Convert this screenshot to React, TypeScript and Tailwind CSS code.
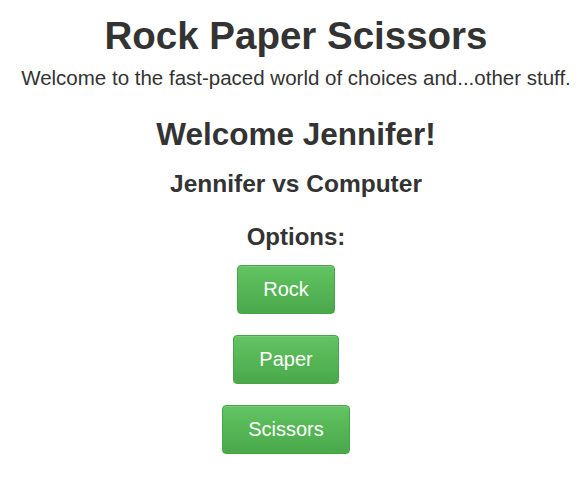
import React from 'react';

const options = ['Rock', 'Paper', 'Scissors'];

const App: React.FC = () => {
  return (
    <div className="min-h-screen bg-white text-[#333333] font-['Liberation_Sans',Arial,sans-serif] text-center pt-[15px] pl-[9px]">
      {/* Header */}
      <h1 className="text-[38.5px] leading-[42px] font-bold">Rock Paper Scissors</h1>
      <p className="mt-[8px] text-[20.5px] leading-[26px] font-light">
        Welcome to the fast-paced world of choices and...other stuff.
      </p>

      {/* Game */}
      <h2 className="mt-[25px] text-[31.5px] leading-[36px] font-bold">Welcome Jennifer!</h2>
      <h3 className="mt-[17px] text-[24.5px] leading-[30px] font-bold">Jennifer vs Computer</h3>
      <h3 className="mt-[23px] text-[24px] leading-[30px] font-bold">Options:</h3>

      <div className="mt-[13px] pr-[20px] flex flex-col items-center gap-[21px]">
        {options.map((opt) => (
          <button
            key={opt}
            className="px-[25px] py-[10px] text-[20px] leading-[27px] text-white rounded-[4px] border border-[#47a447] bg-gradient-to-b from-[#62c462] to-[#4aa84a] shadow-[inset_0_1px_0_rgba(255,255,255,0.15)]"
          >
            {opt}
          </button>
        ))}
      </div>
    </div>
  );
};

export default App;
